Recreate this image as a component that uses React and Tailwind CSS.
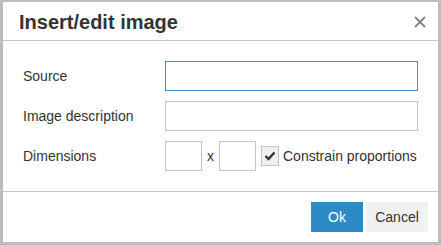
import React from 'react';

const Field = ({ label, focused }) => (
  <div className="flex items-center h-[30px]">
    <span className="w-[142px] text-[14px] text-[#333]">{label}</span>
    <div
      className={`flex-1 h-[30px] bg-white border ${
        focused ? 'border-[#3d8ed3]' : 'border-[#c5c5c5]'
      }`}
    />
  </div>
);

export default function App() {
  return (
    <div
      className="w-[441px] h-[245px] bg-[#bdbdbd] pt-[2px] pl-[3px] pr-[3px] pb-[3px]"
      style={{ fontFamily: '"Liberation Sans", Arial, sans-serif' }}
    >
      <div className="bg-white h-full flex flex-col">
        {/* Header */}
        <div className="h-[39px] flex items-center justify-between pl-[16px] pr-[12px] pt-[2px] border-b border-[#c5c5c5]">
          <h1 className="text-[20px] font-bold text-[#333] leading-none">Insert/edit image</h1>
          <svg width="12" height="12" viewBox="0 0 12 12" className="text-[#858585]">
            <path d="M1 1 L11 11 M11 1 L1 11" stroke="currentColor" strokeWidth="1.8" />
          </svg>
        </div>

        {/* Body */}
        <div className="h-[151px] border-b border-[#c5c5c5] pt-[20px] pl-[20px] pr-[20px] flex flex-col gap-[10px]">
          <Field label="Source" focused />
          <Field label="Image description" />
          <div className="flex items-center h-[30px]">
            <span className="w-[142px] text-[14px] text-[#333]">Dimensions</span>
            <div className="w-[37px] h-[30px] border border-[#c5c5c5]" />
            <span className="w-[17px] text-center text-[14px] text-[#333]">x</span>
            <div className="w-[37px] h-[30px] border border-[#c5c5c5]" />
            <div className="ml-[5px] w-[18px] h-[20px] bg-[#f0f0f0] border border-[#c5c5c5] flex items-center justify-center">
              <svg width="12" height="10" viewBox="0 0 12 10">
                <path d="M1.5 5 L4.5 8 L10.5 1.5" fill="none" stroke="#333" strokeWidth="2.4" />
              </svg>
            </div>
            <span className="ml-[4px] text-[14px] text-[#333]">Constrain proportions</span>
          </div>
        </div>

        {/* Footer */}
        <div className="flex-1 flex items-center justify-end pr-[10px] gap-[3px]">
          <button className="w-[52px] h-[30px] bg-[#2d8ac7] text-white text-[14px]">Ok</button>
          <button className="w-[62px] h-[30px] bg-[#f0f0f0] text-[#333] text-[14px]">Cancel</button>
        </div>
      </div>
    </div>
  );
}
